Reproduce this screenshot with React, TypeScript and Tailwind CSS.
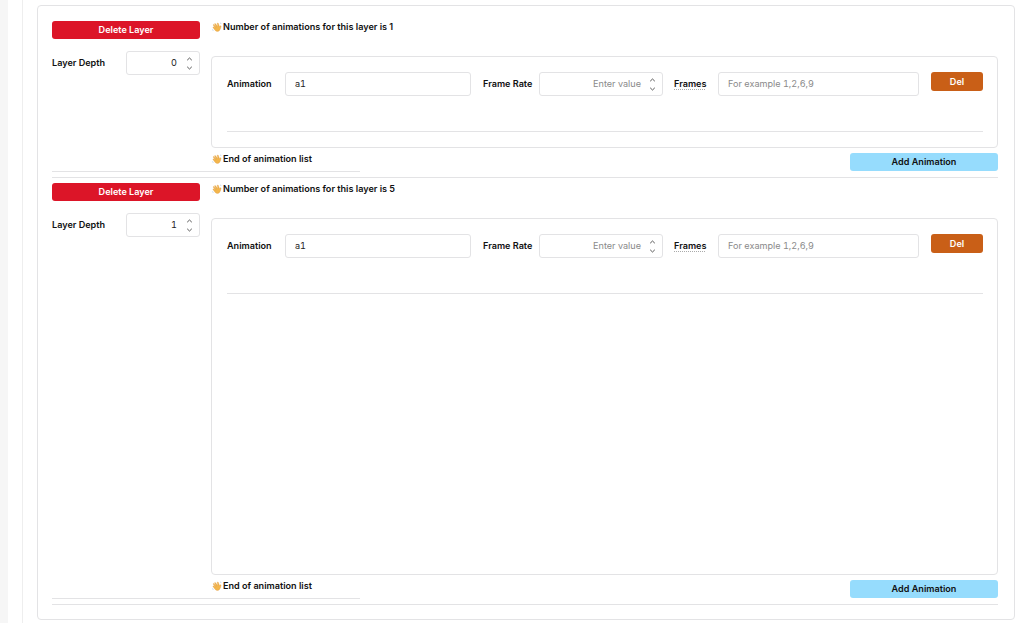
import React from 'react';

const inputBase =
  'h-[24px] rounded-[3px] border border-[#e3e3e5] bg-white pb-[1px] text-[9.1px] tabular-nums text-[#222] placeholder:text-[#8a8a8a] outline-none';

function WaveHand() {
  return (
    <svg width="10" height="10" viewBox="0 0 20 20" className="shrink-0">
      <path
        d="M7 3.500 12 9 10.500 3.200c-.3-1.300 1.500-1.800 2-.5l2.800 7c.8-1 1-2.500 2-2.300 1 .2.900 1.300.6 2.300-.6 2.600-1 5-2.900 7.300-2.400 2.700-6.200 2.300-8.500 0L2.300 11.500c-.9-1 .4-2.300 1.400-1.400L6.500 12.500 2.600 6.500c-.7-1.100.8-2.100 1.600-1.100L8.500 10.500 5.300 4.500c-.6-1.200 1-2.100 1.700-1z"
        fill="#f3b64c"
        stroke="#d9923a"
        strokeWidth="0.6"
      />
      <path d="M1 14.500c.2 1.500 1 2.700 2.200 3.500M16 1.500c1 .3 2 1.200 2.300 2.300" fill="none" stroke="#8fb8d8" strokeWidth="0.9" />
    </svg>
  );
}

function Spinner() {
  return (
    <svg width="7" height="13" viewBox="0 0 7 13" fill="none" stroke="#444" strokeWidth="0.9" className="shrink-0">
      <path d="M1.200 3.200 3.500 1 5.800 3.200" />
      <path d="M1.200 9.800 3.500 12 5.800 9.800" />
    </svg>
  );
}

function Notice({ children }: { children: React.ReactNode }) {
  return (
    <div className="flex h-[11px] items-center gap-[1px] pl-[1px] text-[9.1px] font-semibold leading-[11px] text-[#111]">
      <WaveHand />
      <span>{children}</span>
    </div>
  );
}

function NumberBox({ className, value, placeholder }: { className: string; value?: string; placeholder?: string }) {
  return (
    <div className={`flex h-[24px] items-center justify-end rounded-[3px] border border-[#e3e3e5] bg-white pr-[6px] ${className}`}>
      <span className={`text-[9.1px] tabular-nums ${value ? 'text-[#222]' : 'text-[#8a8a8a]'}`}>{value ?? placeholder}</span>
      <span className={value ? 'ml-[9px]' : 'ml-[8px]'}>
        <Spinner />
      </span>
    </div>
  );
}

function Layer({ depth, count, panelHeight }: { depth: string; count: number; panelHeight: string }) {
  return (
    <section>
      <div className="flex gap-[11px]">
        <div className="w-[148px] shrink-0">
          <button className="block h-[18px] w-full rounded-[3px] bg-[#dc1528] text-[9.1px] font-semibold text-white">
            Delete Layer
          </button>
          <div className="mt-[12px] flex items-center justify-between">
            <span className="text-[9.1px] font-semibold text-[#111]">Layer Depth</span>
            <NumberBox className="w-[74px]" value={depth} />
          </div>
        </div>
        <div className="min-w-0 flex-1">
          <Notice>Number of animations for this layer is {count}</Notice>
          <div className={`mt-[24px] rounded-[4px] border border-[#e3e3e5] bg-white pl-[15px] pr-[14px] pt-[15px] ${panelHeight}`}>
            <div className="flex items-start border-b border-[#e3e3e5] pb-[35px]">
              <label className="flex h-[24px] w-[58px] shrink-0 items-center text-[9.1px] font-semibold text-[#111]">Animation</label>
              <input readOnly value="a1" className={`${inputBase} w-[186px] shrink-0 px-[9px]`} />
              <label className="ml-[12px] flex h-[24px] w-[56px] shrink-0 items-center text-[9.1px] font-semibold text-[#111]">Frame Rate</label>
              <NumberBox className="w-[124px] shrink-0" placeholder="Enter value" />
              <label className="ml-[11px] flex h-[24px] w-[44px] shrink-0 items-center text-[9.1px] font-semibold text-[#111] underline decoration-dotted decoration-[#aaaaaa] underline-offset-2">
                Frames
              </label>
              <input placeholder="For example 1,2,6,9" className={`${inputBase} w-[201px] shrink-0 px-[9px]`} />
              <button className="ml-[12px] h-[19px] w-[52px] shrink-0 rounded-[3px] bg-[#c95f17] text-[9.1px] font-semibold text-white">
                Del
              </button>
            </div>
          </div>
        </div>
      </div>
      <div className="mt-[5px] flex items-start justify-between">
        <div className="h-[19px] w-[308px] border-b border-[#e3e3e5] pl-[159px]">
          <Notice>End of animation list</Notice>
        </div>
        <button className="h-[18px] w-[148px] rounded-[3px] bg-[#96dcfd] text-[9.1px] font-semibold text-[#111]">
          Add Animation
        </button>
      </div>
      <hr className="mt-[5px] border-[#e3e3e5]" />
    </section>
  );
}

export default function App() {
  return (
    <div className="flex h-[623px] overflow-hidden bg-white font-['Inter',sans-serif]">
      <div className="w-[8px] shrink-0 bg-[#f6f6f6]" />
      <div className="w-[15px] shrink-0 border-r border-[#eeeeee]" />
      <main className="min-w-0 flex-1 pb-[3px] pl-[14px] pr-[9px] pt-[5px]">
        <div className="flex h-full flex-col gap-[5px] rounded-[4px] border border-[#e3e3e5] pl-[14px] pr-[16px] pt-[15px]">
          <Layer depth="0" count={1} panelHeight="h-[92px]" />
          <Layer depth="1" count={5} panelHeight="h-[357px]" />
        </div>
      </main>
    </div>
  );
}
